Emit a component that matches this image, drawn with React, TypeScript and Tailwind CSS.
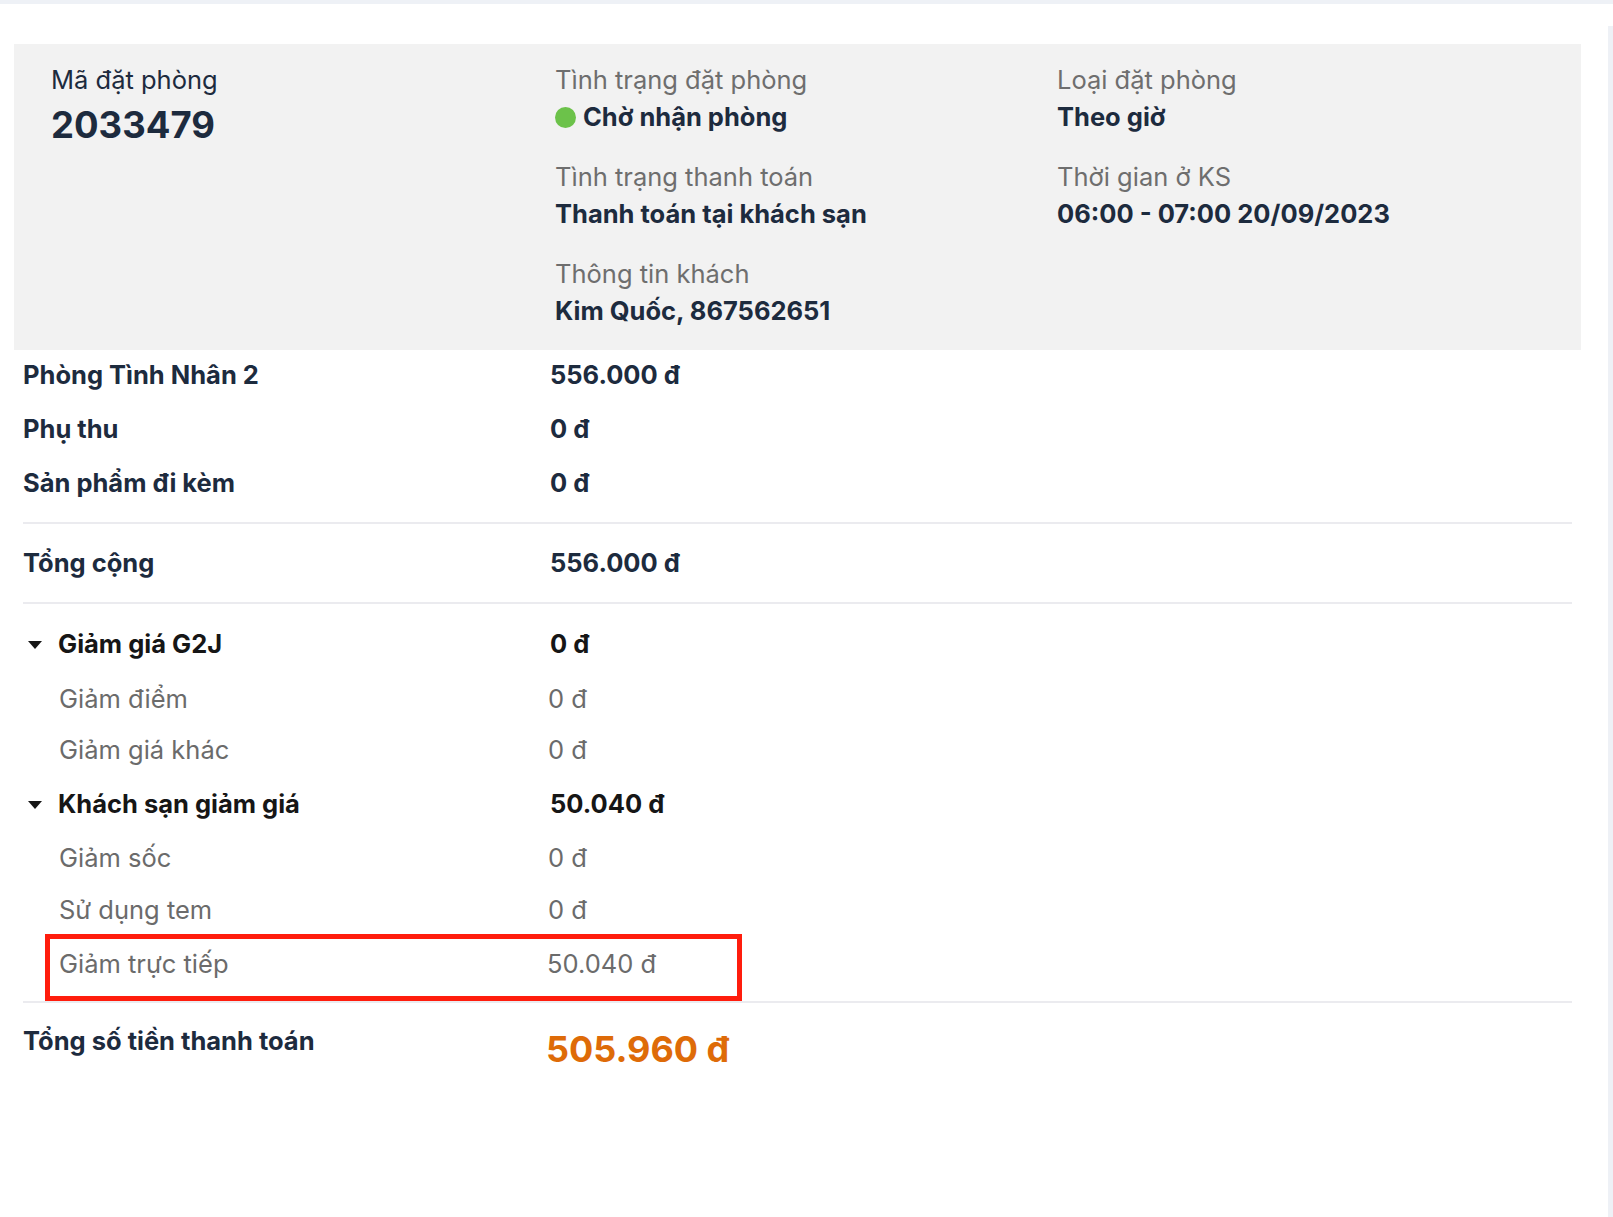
import React from "react";

const NAVY = "text-[#1d2b3e]";

function InfoItem({ label, value, dot }: { label: string; value: string; dot?: boolean }) {
  return (
    <div className="mb-[23px]">
      <div className="text-[25.5px] leading-[36px] text-[#6e6e6e]">{label}</div>
      <div className={`flex items-center text-[25.5px] leading-[38px] font-bold ${NAVY}`}>
        {dot && <span className="mr-[7px] inline-block h-[21px] w-[21px] rounded-full bg-[#6cc24a]" />}
        {value}
      </div>
    </div>
  );
}

function PriceRow({ label, value }: { label: string; value: string }) {
  return (
    <div className={`flex h-[54px] text-[25.5px] leading-[36px] font-bold ${NAVY}`}>
      <div className="w-[527px]">{label}</div>
      <div>{value}</div>
    </div>
  );
}

function GroupRow({ label, value, h }: { label: string; value: string; h: string }) {
  return (
    <div className={`flex ${h} text-[25.5px] leading-[36px] font-bold text-[#161616]`}>
      <div className="flex w-[527px] items-start">
        <svg width="14" height="8" viewBox="0 0 14 8" className="ml-[5px] mt-[15px] mr-[16px]">
          <path d="M0 0 H14 L7 8 Z" fill="#161616" />
        </svg>
        <span>{label}</span>
      </div>
      <div>{value}</div>
    </div>
  );
}

function SubRow({ label, value, h }: { label: string; value: string; h: string }) {
  return (
    <div className={`flex ${h} text-[25.5px] leading-[36px] text-[#6b6b6b]`}>
      <div className="w-[525px] pl-[36px]">{label}</div>
      <div>{value}</div>
    </div>
  );
}

export default function App() {
  return (
    <div className="min-h-[1217px] w-[1613px] bg-white" style={{ fontFamily: "Inter, 'Noto Sans', sans-serif" }}>
      <div className="h-[4px] w-full bg-[#eef1f6]" />
      <div className="flex">
        <div className="w-[1608px]">
          {/* booking summary panel */}
          <div className="ml-[14px] mt-[40px] flex w-[1567px] bg-[#f2f2f2] pl-[37px] pt-[18px]">
            <div className="w-[504px]">
              <div className={`text-[25.5px] leading-[36px] ${NAVY}`}>Mã đặt phòng</div>
              <div className={`mt-[5px] text-[36.5px] leading-[44px] font-bold ${NAVY}`}>2033479</div>
            </div>
            <div className="w-[502px]">
              <InfoItem label="Tình trạng đặt phòng" value="Chờ nhận phòng" dot />
              <InfoItem label="Tình trạng thanh toán" value="Thanh toán tại khách sạn" />
              <div className="mb-[20px]">
                <div className="text-[25.5px] leading-[36px] text-[#6e6e6e]">Thông tin khách</div>
                <div className={`text-[25.5px] leading-[38px] font-bold ${NAVY}`}>Kim Quốc, 867562651</div>
              </div>
            </div>
            <div className="flex-1">
              <InfoItem label="Loại đặt phòng" value="Theo giờ" />
              <InfoItem label="Thời gian ở KS" value="06:00 - 07:00 20/09/2023" />
            </div>
          </div>

          {/* price breakdown */}
          <div className="ml-[23px] w-[1549px] pt-[7px]">
            <PriceRow label="Phòng Tình Nhân 2" value="556.000 đ" />
            <PriceRow label="Phụ thu" value="0 đ" />
            <PriceRow label="Sản phẩm đi kèm" value="0 đ" />
            <div className="mt-[3px] h-[2px] bg-[#ebebef]" />
            <div className={`mt-[21px] flex text-[25.5px] leading-[36px] font-bold ${NAVY}`}>
              <div className="w-[527px]">Tổng cộng</div>
              <div>556.000 đ</div>
            </div>
            <div className="mt-[21px] h-[2px] bg-[#ebebef]" />
            <div className="mt-[22px]">
              <GroupRow label="Giảm giá G2J" value="0 đ" h="h-[55px]" />
              <SubRow label="Giảm điểm" value="0 đ" h="h-[51px]" />
              <SubRow label="Giảm giá khác" value="0 đ" h="h-[54px]" />
              <GroupRow label="Khách sạn giảm giá" value="50.040 đ" h="h-[54px]" />
              <SubRow label="Giảm sốc" value="0 đ" h="h-[52px]" />
              <SubRow label="Sử dụng tem" value="0 đ" h="h-[42px]" />
              <div className="ml-[22px] flex h-[67px] w-[697px] border-[5px] border-[#ff1d0d] pl-[9px] pt-[7px] text-[25.5px] leading-[36px] text-[#6b6b6b]">
                <div className="w-[488px]">Giảm trực tiếp</div>
                <div>50.040 đ</div>
              </div>
            </div>
            <div className="h-[2px] bg-[#ebebef]" />
            <div className={`mt-[20px] flex items-start text-[25.5px] leading-[36px] font-bold ${NAVY}`}>
              <div className="w-[523px]">Tổng số tiền thanh toán</div>
              <div className="mt-[4px] text-[36px] leading-[44px] font-bold text-[#de6b08]">505.960 đ</div>
            </div>
          </div>
        </div>
        <div className="mt-[22px] min-h-[1191px] w-[5px] bg-[#eef1f6]" />
      </div>
    </div>
  );
}
